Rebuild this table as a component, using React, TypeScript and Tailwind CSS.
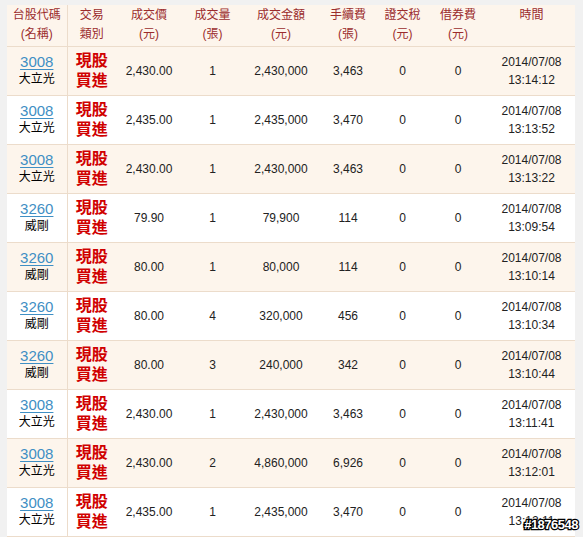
import React from 'react';

type Trade = {
  code: string;
  name: string;
  price: string;
  qty: string;
  amount: string;
  fee: string;
  date: string;
  time: string;
};

const TRADES: Trade[] = [
  { code: '3008', name: '大立光', price: '2,430.00', qty: '1', amount: '2,430,000', fee: '3,463', date: '2014/07/08', time: '13:14:12' },
  { code: '3008', name: '大立光', price: '2,435.00', qty: '1', amount: '2,435,000', fee: '3,470', date: '2014/07/08', time: '13:13:52' },
  { code: '3008', name: '大立光', price: '2,430.00', qty: '1', amount: '2,430,000', fee: '3,463', date: '2014/07/08', time: '13:13:22' },
  { code: '3260', name: '威剛', price: '79.90', qty: '1', amount: '79,900', fee: '114', date: '2014/07/08', time: '13:09:54' },
  { code: '3260', name: '威剛', price: '80.00', qty: '1', amount: '80,000', fee: '114', date: '2014/07/08', time: '13:10:14' },
  { code: '3260', name: '威剛', price: '80.00', qty: '4', amount: '320,000', fee: '456', date: '2014/07/08', time: '13:10:34' },
  { code: '3260', name: '威剛', price: '80.00', qty: '3', amount: '240,000', fee: '342', date: '2014/07/08', time: '13:10:44' },
  { code: '3008', name: '大立光', price: '2,430.00', qty: '1', amount: '2,430,000', fee: '3,463', date: '2014/07/08', time: '13:11:41' },
  { code: '3008', name: '大立光', price: '2,430.00', qty: '2', amount: '4,860,000', fee: '6,926', date: '2014/07/08', time: '13:12:01' },
  { code: '3008', name: '大立光', price: '2,435.00', qty: '1', amount: '2,435,000', fee: '3,470', date: '2014/07/08', time: '13:12:11' },
];

const HEADERS: [string, string][] = [
  ['台股代碼', '(名稱)'],
  ['交易', '類別'],
  ['成交價', '(元)'],
  ['成交量', '(張)'],
  ['成交金額', '(元)'],
  ['手續費', '(張)'],
  ['證交稅', '(元)'],
  ['借券費', '(元)'],
  ['時間', ''],
];

const FONT = { fontFamily: '"Liberation Sans", Arial, "Noto Sans CJK TC", sans-serif' };

export default function App() {
  return (
    <div className="relative w-[583px] h-[537px] overflow-hidden bg-[#f1f1f1] pl-[7px] pt-[5px]" style={FONT}>
      <table className="w-[568px] table-fixed border-collapse text-[12px] text-[#222]">
        <colgroup>
          <col className="w-[60px]" />
          <col className="w-[49px]" />
          <col className="w-[66px]" />
          <col className="w-[61px]" />
          <col className="w-[76px]" />
          <col className="w-[58px]" />
          <col className="w-[51px]" />
          <col className="w-[60px]" />
          <col className="w-[87px]" />
        </colgroup>
        <thead>
          <tr className="h-[41px] bg-[#fdf5ec] border-b border-[#ecdccb]">
            {HEADERS.map(([a, b], i) => (
              <th
                key={i}
                className={`align-middle text-center font-normal text-[12px] leading-[19px] text-[#9b2c2c] ${i === 0 ? 'border-r border-[#ecdccb]' : ''}`}
              >
                <div className={b ? '' : 'pb-[19px]'}>{a}</div>
                {b && <div>{b}</div>}
              </th>
            ))}
          </tr>
        </thead>
        <tbody>
          {TRADES.map((t, i) => (
            <tr key={i} className={`h-[49px] border-b border-[#ecdccb] ${i % 2 === 0 ? 'bg-[#fdf5ec]' : 'bg-white'}`}>
              <td className="text-center align-middle border-r border-[#ecdccb]">
                <a className="block text-[15px] leading-[17px] text-[#3f8fc4] underline underline-offset-2">{t.code}</a>
                <div className="text-[12px] leading-[17px] text-black mt-[1px]">{t.name}</div>
              </td>
              <td className="text-center align-middle font-bold text-[16px] leading-[20px] text-[#d00000]">
                <div>現股</div>
                <div>買進</div>
              </td>
              <td className="text-center align-middle">{t.price}</td>
              <td className="text-center align-middle">{t.qty}</td>
              <td className="text-center align-middle">{t.amount}</td>
              <td className="text-center align-middle">{t.fee}</td>
              <td className="text-center align-middle">0</td>
              <td className="text-center align-middle">0</td>
              <td className="text-center align-middle leading-[18px]">
                <div>{t.date}</div>
                <div>{t.time}</div>
              </td>
            </tr>
          ))}
        </tbody>
      </table>
      <div
        className="absolute right-[5px] bottom-[6px] text-[13px] font-bold leading-none text-white tracking-[-0.5px]"
        style={{ WebkitTextStroke: '2.5px #000', paintOrder: 'stroke fill' }}
      >
        #1876548
      </div>
    </div>
  );
}
